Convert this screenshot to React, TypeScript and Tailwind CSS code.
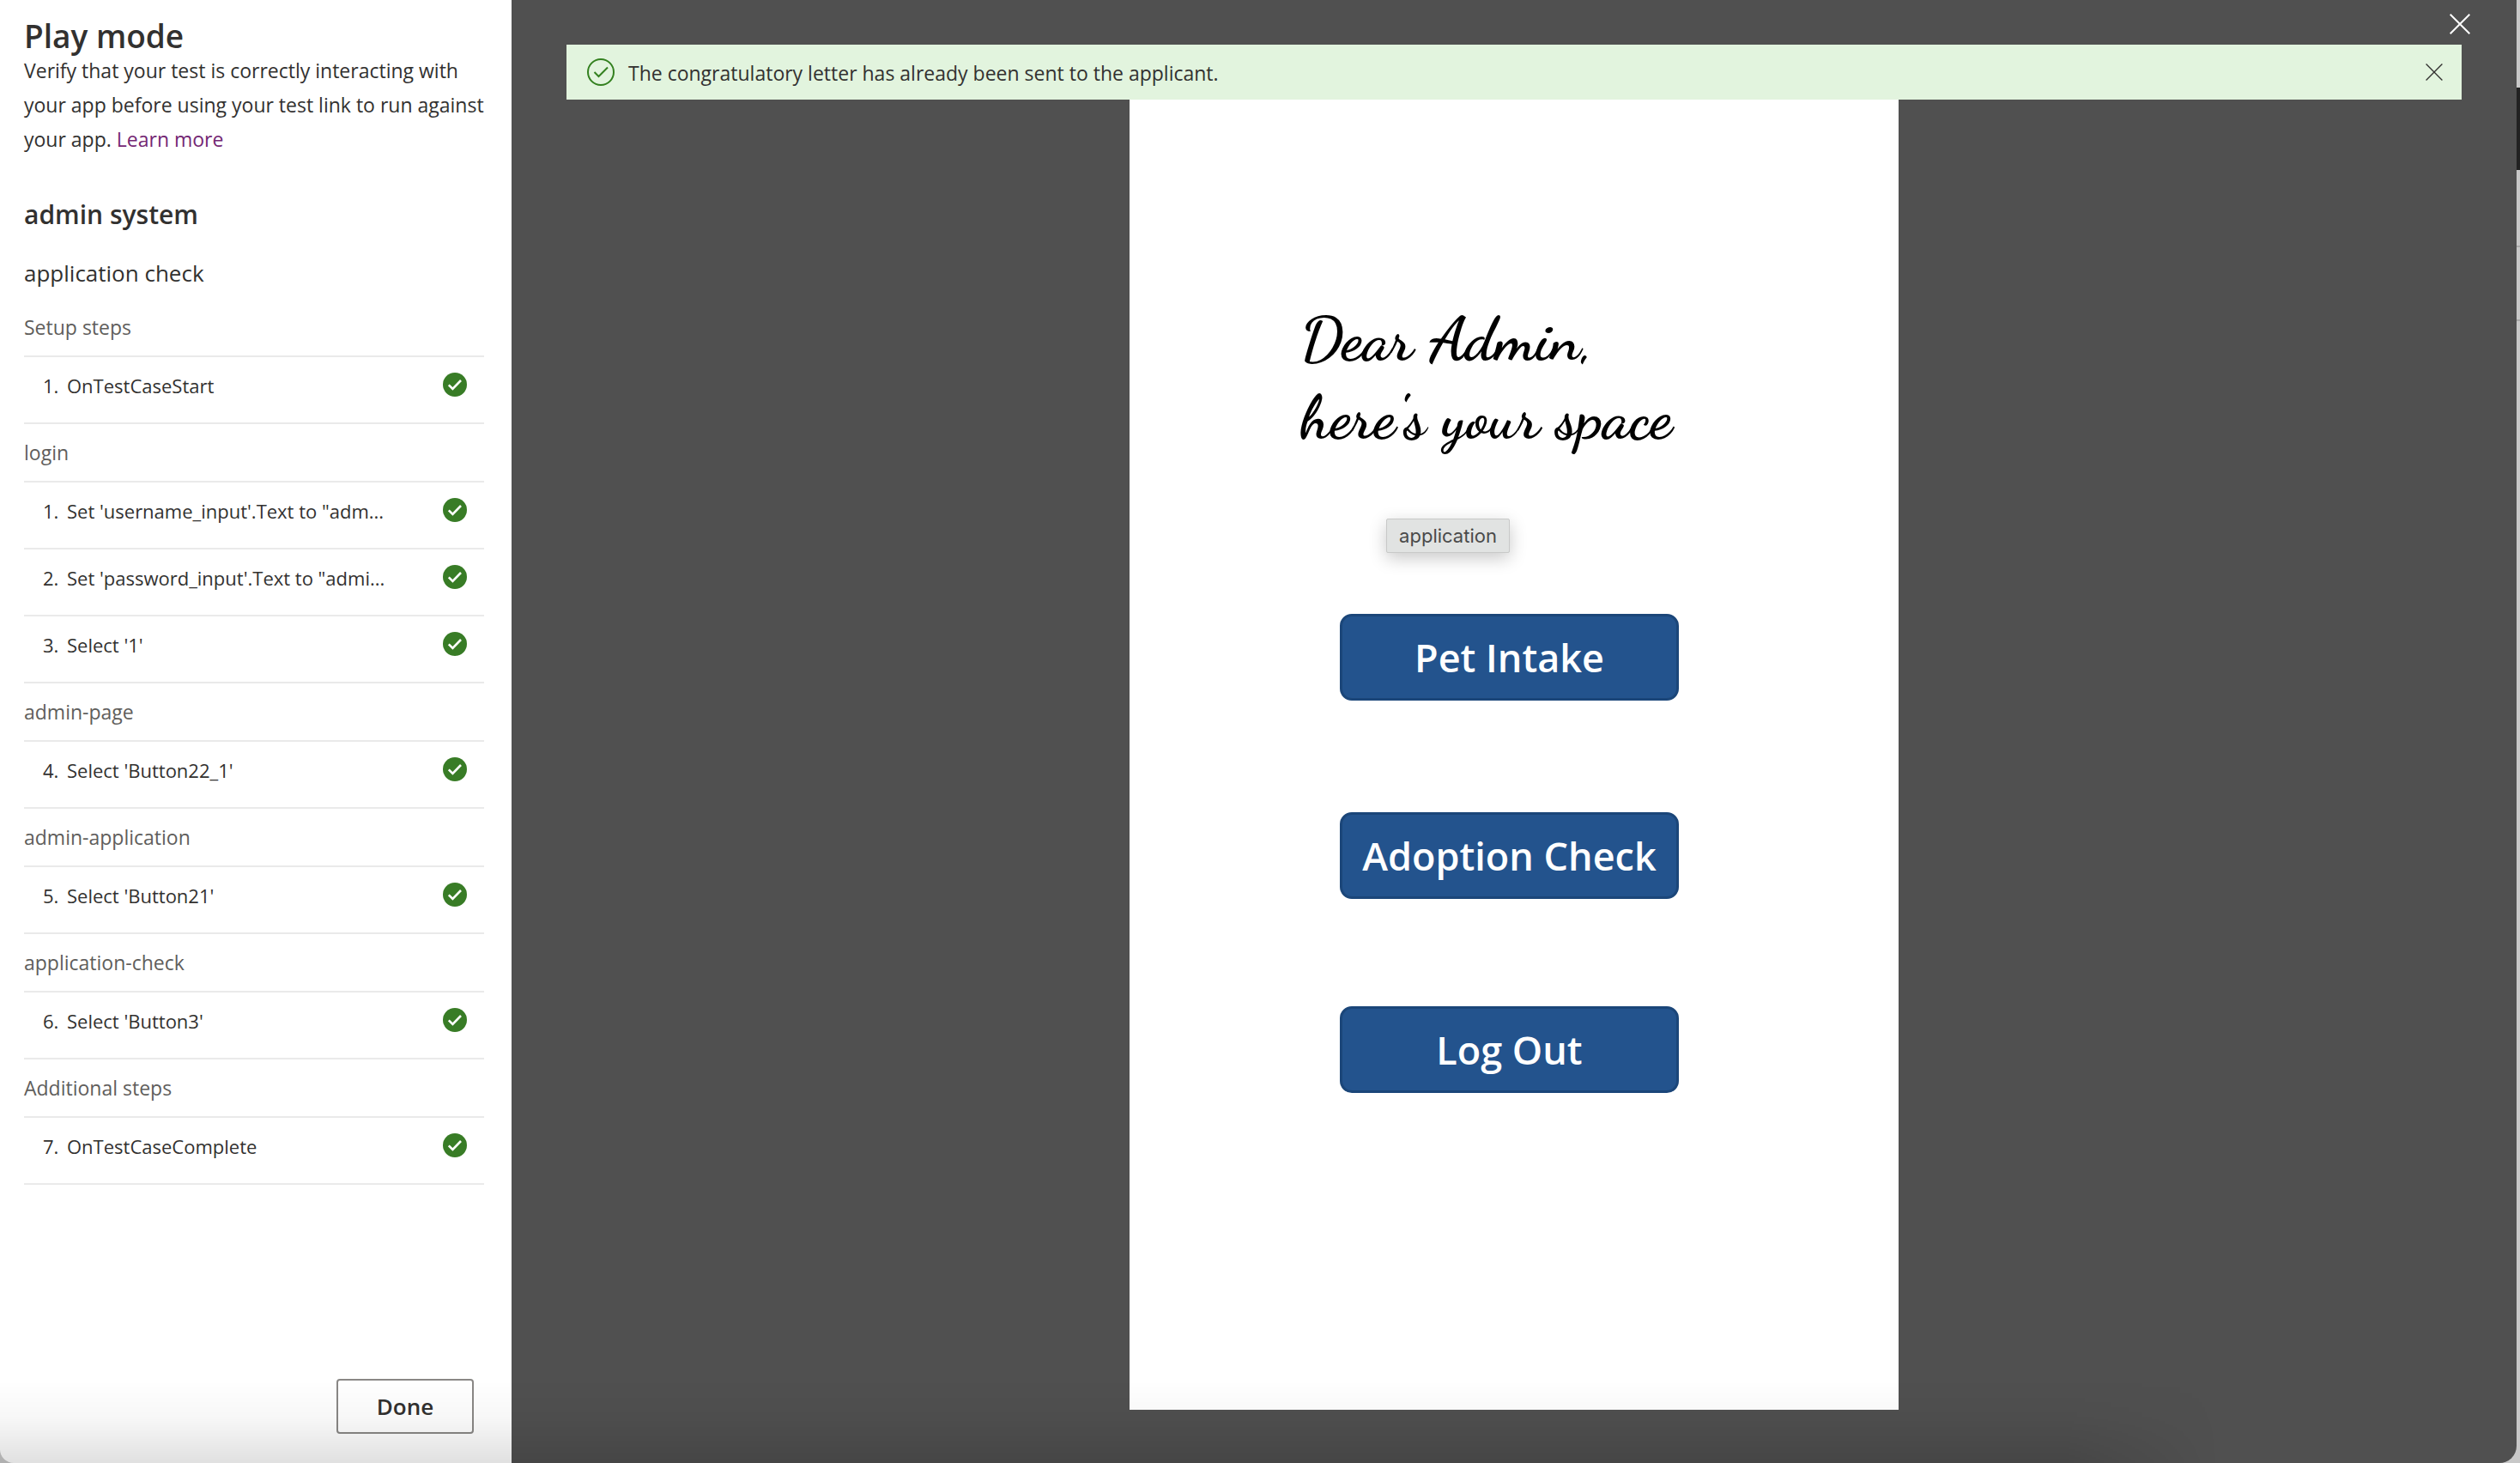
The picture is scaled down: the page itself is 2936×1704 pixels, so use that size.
type Step = { n: number; label: string };
type Group = { title: string; steps: Step[] };

const groups: Group[] = [
  { title: "Setup steps", steps: [{ n: 1, label: "OnTestCaseStart" }] },
  {
    title: "login",
    steps: [
      { n: 1, label: "Set 'username_input'.Text to \"adm..." },
      { n: 2, label: "Set 'password_input'.Text to \"admi..." },
      { n: 3, label: "Select '1'" },
    ],
  },
  { title: "admin-page", steps: [{ n: 4, label: "Select 'Button22_1'" }] },
  { title: "admin-application", steps: [{ n: 5, label: "Select 'Button21'" }] },
  { title: "application-check", steps: [{ n: 6, label: "Select 'Button3'" }] },
  { title: "Additional steps", steps: [{ n: 7, label: "OnTestCaseComplete" }] },
];

function PassedIcon() {
  return (
    <svg viewBox="0 0 28 28" className="mb-0.5 size-7 shrink-0" role="img" aria-label="Passed">
      <circle cx="14" cy="14" r="14" fill="#387c26" />
      <path d="M6.800 14.400l4.600 4.600L21 9" fill="none" stroke="#fff" strokeWidth="2.6" />
    </svg>
  );
}

function SuccessIcon() {
  return (
    <svg viewBox="0 0 32 32" className="size-8 shrink-0" aria-hidden="true">
      <circle cx="16" cy="16" r="15" fill="none" stroke="#33801f" strokeWidth="2" />
      <path d="M8.500 16l5 5L24 10.500" fill="none" stroke="#33801f" strokeWidth="2" />
    </svg>
  );
}

function Cross({ className }: { className: string }) {
  return (
    <svg viewBox="0 0 24 24" className={className} aria-hidden="true">
      <path d="M.7.7l22.600 22.600M23.300.7L.7 23.300" fill="none" stroke="currentColor" />
    </svg>
  );
}

function StepGroup({ group }: { group: Group }) {
  return (
    <section>
      <h4 className="flex h-[68px] items-center border-b-2 border-[#eaeaea] text-[#605e5c]">{group.title}</h4>
      <ol className="text-[22px]">
        {group.steps.map((step) => (
          <li key={step.n} className="flex h-[78px] items-center border-b-2 border-[#eaeaea] pr-5 pb-2.5 pl-[22px]">
            <span className="w-7 shrink-0">{step.n}.</span>
            <span className="min-w-0 flex-1 whitespace-nowrap">{step.label}</span>
            <PassedIcon />
          </li>
        ))}
      </ol>
    </section>
  );
}

function Sidebar() {
  return (
    <aside className="flex w-[596px] shrink-0 flex-col rounded-bl-[16px] bg-white pt-[22px] pr-8 pb-[34px] pl-7 text-[23px] leading-10 text-[#323130]">
      <h1 className="text-[37px] leading-10 font-semibold">Play mode</h1>
      <p className="-mr-4">
        Verify that your test is correctly interacting with
        <br />
        your app before using your test link to run against
        <br />
        your app.{" "}
        <a href="#learn-more" className="text-[#742774]">
          Learn more
        </a>
      </p>
      <h2 className="mt-12 text-[30px] leading-10 font-semibold">admin system</h2>
      <h3 className="mt-[30px] mb-3 text-[26px] leading-9">application check</h3>
      {groups.map((group) => (
        <StepGroup key={group.title} group={group} />
      ))}
      <button className="mt-auto mr-3 h-16 w-40 self-end rounded-sm border-2 border-[#8a8886] text-[26px] font-semibold">
        Done
      </button>
    </aside>
  );
}

const appButton =
  "flex h-[101px] w-[395px] items-center justify-center rounded-[14px] border-3 border-[#1b4679] bg-[#23538d] text-[45px] leading-none font-semibold text-white";

function AppScreen() {
  return (
    <div className="relative flex w-[896px] flex-1 flex-col bg-white pt-[234px]">
      <h2 className="ml-[199px] font-['Dancing_Script','Liberation_Serif',cursive] text-[72px] leading-[91px] font-bold text-black">
        Dear Admin,
        <br />
        here's your space
      </h2>
      <div
        role="tooltip"
        className="absolute top-[488px] left-[299px] flex h-10 w-36 items-center justify-center rounded-xs border border-[#c8c9c8] bg-[#e1e3e2] font-['Inter',sans-serif] text-[22px] text-[#4a4a4a] shadow-[0_6px_20px_rgba(0,0,0,0.22)]"
      >
        application
      </div>
      <div className="mt-[183px] ml-[245px] flex flex-col">
        <button className={appButton}>Pet Intake</button>
        <button className={appButton + " mt-[130px]"}>Adoption Check</button>
        <button className={appButton + " mt-[125px]"}>Log Out</button>
      </div>
    </div>
  );
}

export default function App() {
  return (
    <div className="relative flex min-h-screen overflow-hidden bg-[#c8c8c8] font-['Open_Sans','Noto_Sans',sans-serif]">
      <Sidebar />
      <main className="flex min-w-0 flex-1 flex-col rounded-br-[20px] bg-[#505050] px-16 pb-[62px]">
        <div className="flex h-[52px] items-start justify-end pt-4">
          <button aria-label="Close play mode" className="-mr-2.5 text-white">
            <Cross className="size-6 stroke-2" />
          </button>
        </div>
        <div role="status" className="flex h-16 items-center bg-[#e2f4de] pr-[22px] pl-6">
          <SuccessIcon />
          <p className="ml-4 flex-1 pt-0.5 text-[23px] text-[#323130]">
            The congratulatory letter has already been sent to the applicant.
          </p>
          <button aria-label="Dismiss message" className="text-[#323130]">
            <Cross className="size-5 stroke-[1.6px]" />
          </button>
        </div>
        <div className="flex flex-1 flex-col items-center">
          <AppScreen />
        </div>
      </main>
      <div className="flex w-1 shrink-0 flex-col">
        <div className="h-[102px]" />
        <div className="h-24 bg-[#222222]" />
        <div className="h-[90px] border-b-2 border-[#aaaaaa]" />
        <div className="h-[86px] border-b-2 border-[#aaaaaa]" />
      </div>
      <div className="pointer-events-none absolute inset-x-0 bottom-0 h-24 bg-linear-to-t from-black/12 via-black/3 via-55% to-transparent mask-r-from-82% mask-r-to-88%" />
    </div>
  );
}
